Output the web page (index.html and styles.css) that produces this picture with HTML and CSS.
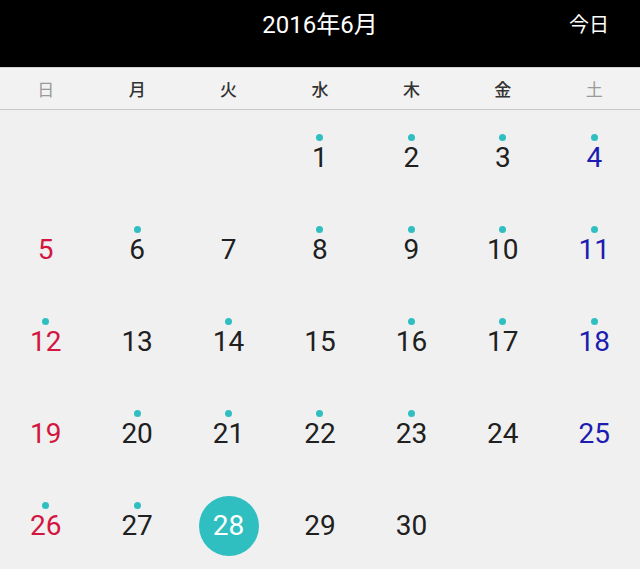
FILE: index.html
```html
<!DOCTYPE html>
<html lang="ja">
<head>
<meta charset="utf-8">
<link rel="stylesheet" href="styles.css">
</head>
<body>
<div class="app">
  <header class="topbar">
    <div class="title">2016年6月</div>
    <div class="today">今日</div>
  </header>
  <div class="weekdays">
    <div class="wd sun">日</div>
    <div class="wd">月</div>
    <div class="wd">火</div>
    <div class="wd">水</div>
    <div class="wd">木</div>
    <div class="wd">金</div>
    <div class="wd sat">土</div>
  </div>
  <div class="grid">
    <div class="cell"></div>
    <div class="cell"></div>
    <div class="cell"></div>
    <div class="cell dot"><span class="num">1</span></div>
    <div class="cell dot"><span class="num">2</span></div>
    <div class="cell dot"><span class="num">3</span></div>
    <div class="cell dot sat"><span class="num">4</span></div>

    <div class="cell sun"><span class="num">5</span></div>
    <div class="cell dot"><span class="num">6</span></div>
    <div class="cell"><span class="num">7</span></div>
    <div class="cell dot"><span class="num">8</span></div>
    <div class="cell dot"><span class="num">9</span></div>
    <div class="cell dot"><span class="num">10</span></div>
    <div class="cell dot sat"><span class="num">11</span></div>

    <div class="cell dot sun"><span class="num">12</span></div>
    <div class="cell"><span class="num">13</span></div>
    <div class="cell dot"><span class="num">14</span></div>
    <div class="cell"><span class="num">15</span></div>
    <div class="cell dot"><span class="num">16</span></div>
    <div class="cell dot"><span class="num">17</span></div>
    <div class="cell dot sat"><span class="num">18</span></div>

    <div class="cell sun"><span class="num">19</span></div>
    <div class="cell dot"><span class="num">20</span></div>
    <div class="cell dot"><span class="num">21</span></div>
    <div class="cell dot"><span class="num">22</span></div>
    <div class="cell dot"><span class="num">23</span></div>
    <div class="cell"><span class="num">24</span></div>
    <div class="cell sat"><span class="num">25</span></div>

    <div class="cell dot sun"><span class="num">26</span></div>
    <div class="cell dot"><span class="num">27</span></div>
    <div class="cell selected"><span class="num">28</span></div>
    <div class="cell"><span class="num">29</span></div>
    <div class="cell"><span class="num">30</span></div>
    <div class="cell"></div>
    <div class="cell"></div>
  </div>
</div>
</body>
</html>
```
FILE: styles.css
```css
html, body {
  margin: 0;
  padding: 0;
  background: #f0f0f0;
}
body {
  font-family: Roboto, "Noto Sans CJK JP", sans-serif;
  width: 640px;
  height: 569px;
  overflow: hidden;
}
.app {
  width: 640px;
}
.topbar {
  height: 67px;
  background: #000;
  border-bottom: 1px solid #d4d4d4;
  display: grid;
  grid-template-columns: 1fr auto 1fr;
  align-items: start;
  color: #fff;
}
.title {
  grid-column: 2;
  font-size: 24px;
  line-height: 28px;
  padding-top: 11px;
}
.today {
  grid-column: 3;
  justify-self: end;
  font-size: 20px;
  line-height: 26px;
  padding-top: 11px;
  padding-right: 31px;
  font-family: "Noto Sans CJK JP", sans-serif;
}
.weekdays {
  height: 41px;
  display: grid;
  grid-template-columns: repeat(7, 1fr);
  align-items: center;
  border-bottom: 1px solid #c8c8c8;
  background: #f2f2f2;
}
.wd {
  text-align: center;
  font-size: 17px;
  font-weight: 500;
  color: #333;
  font-family: "Noto Sans CJK JP", sans-serif;
  line-height: 22px;
  padding-top: 1px;
}
.wd.sun, .wd.sat {
  color: #9a9a9a;
  font-weight: 400;
}
.grid {
  display: grid;
  grid-template-columns: repeat(7, 1fr);
  grid-auto-rows: 92px;
}
.cell {
  position: relative;
  display: flex;
  flex-direction: column;
  align-items: center;
  padding-top: 18px;
  color: #202020;
}
.cell.sun { color: #d3163f; }
.cell.sat { color: #1c1cb0; }
.num {
  width: 60px;
  height: 60px;
  display: flex;
  align-items: center;
  justify-content: center;
  font-size: 28px;
  line-height: 32px;
  border-radius: 50%;
}
.cell.dot::before {
  content: "";
  position: absolute;
  top: 24px;
  left: 50%;
  width: 7px;
  height: 7px;
  margin-left: -3.5px;
  border-radius: 50%;
  background: #2fbfc0;
}
.cell.selected .num {
  background: #2fbfc0;
  color: #fff;
}
```
